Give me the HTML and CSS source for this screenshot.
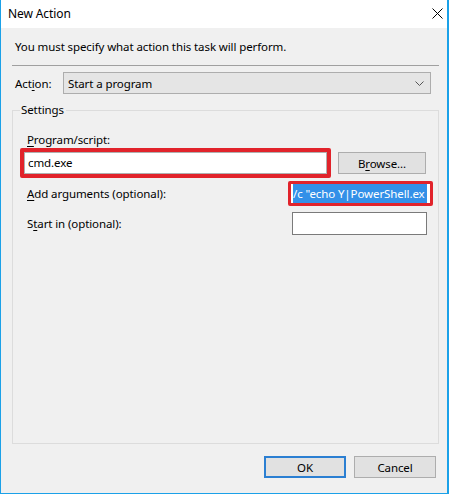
FILE: index.html
```html
<!DOCTYPE html>
<html lang="en">

<head>
    <meta charset="UTF-8">
    <meta name="viewport" content="width=device-width, initial-scale=1.0">
    <title>New Action</title>

    <link rel="stylesheet" href="styles.css">
</head>

<body>
    <div class="window">
        <div class="titlebar">
            <span class="title">New Action</span>
            <svg class="close" width="11" height="11" viewBox="0 0 11 11">
                <path d="M0.5 0.5 L10.5 10.5 M10.5 0.5 L0.5 10.5" stroke="#000" stroke-width="1" fill="none" />
            </svg>
        </div>

        <div class="content">
            <p class="intro">You must specify what action this task will perform.</p>
            <div class="sep"></div>

            <div class="action-row">
                <span class="action-label">Act<u>i</u>on:</span>
                <div class="combo">
                    <span>Start a program</span>
                    <svg width="9" height="5" viewBox="0 0 9 5">
                        <path d="M0.5 0.5 L4.5 4.5 L8.5 0.5" stroke="#555" stroke-width="1" fill="none" />
                    </svg>
                </div>
            </div>

            <fieldset class="settings">
                <legend>Settings</legend>

                <div class="field-label"><u>P</u>rogram/script:</div>
                <div class="program-row">
                    <div class="mark mark-program">
                        <div class="textbox">cmd.exe</div>
                    </div>
                    <button class="btn browse">B<u>r</u>owse...</button>
                </div>

                <div class="arg-row">
                    <span class="row-label"><u>A</u>dd arguments (optional):</span>
                    <div class="mark mark-args">
                        <div class="textbox selected"><span>/c "echo Y|PowerShell.ex</span></div>
                    </div>
                </div>

                <div class="arg-row start-row">
                    <span class="row-label">S<u>t</u>art in (optional):</span>
                    <div class="textbox start"></div>
                </div>
            </fieldset>

            <div class="buttons">
                <button class="btn default">OK</button>
                <button class="btn">Cancel</button>
            </div>
        </div>
    </div>
</body>

</html>
```

FILE: styles.css
```css
* {
    margin: 0;
    padding: 0;
    box-sizing: border-box;
}

body {
    width: 449px;
    height: 495px;
    background: #fff;
    font-family: "Noto Sans", "Open Sans", sans-serif;
    font-size: 11.5px;
    letter-spacing: -0.1px;
    color: #000;
}

u {
    text-decoration-thickness: 1px;
    text-underline-offset: 2px;
}

.window {
    width: 449px;
    height: 494px;
    display: flex;
    flex-direction: column;
    border-left: 1px solid #1ba1e8;
    border-right: 2px solid #1ba1e8;
    border-bottom: 1px solid #1ba1e8;
}

.titlebar {
    height: 28px;
    background: #fff;
    display: flex;
    align-items: center;
    justify-content: space-between;
    padding: 0 4px 2px 7px;
    font-size: 12px;
}

.close {
    margin-top: 1px;
}

.content {
    flex: 1;
    background: #f0f0f0;
    padding: 0 8px 0 11px;
    display: flex;
    flex-direction: column;
}

.intro {
    margin: 11px 0 0 3px;
    line-height: 16px;
}

.sep {
    margin-top: 10px;
    border-top: 1px solid #a0a0a0;
}

.action-row {
    display: flex;
    align-items: center;
    margin-top: 6px;
    padding-left: 3px;
}

.action-label {
    width: 48px;
}

.combo {
    width: 368px;
    height: 22px;
    background: #e5e5e5;
    border: 1px solid #adadad;
    display: flex;
    align-items: center;
    justify-content: space-between;
    padding: 0 6px 0 4px;
}

.settings {
    margin-top: 8px;
    height: 342px;
    border: 1px solid #dcdcdc;
    padding: 0 5px 0 7px;
}

.settings legend {
    padding: 0 2px 0 1px;
    line-height: 16px;
}

.field-label {
    margin: 14px 0 0 7px;
    line-height: 16px;
}

.program-row {
    display: flex;
    align-items: center;
}

.mark {
    border: 4px solid #e1232b;
    border-radius: 2px;
}

.textbox {
    background: #fff;
    border: 1px solid #7a7a7a;
    height: 22px;
    line-height: 20px;
    padding-left: 3px;
    white-space: nowrap;
    overflow: hidden;
}

.mark-program {
    width: 311px;
}

.mark-program .textbox {
    border-color: #b0b0b0;
}

.browse {
    margin-left: 7px;
    width: 88px;
}

.btn {
    height: 22px;
    background: #e1e1e1;
    border: 1px solid #adadad;
    font-family: inherit;
    font-size: 11.5px;
    letter-spacing: -0.1px;
    color: #000;
}

.arg-row {
    display: flex;
    align-items: center;
    justify-content: space-between;
    margin-top: 3px;
    padding-left: 7px;
}

.mark-args {
    width: 145px;
    height: 25px;
    border-width: 3px;
}

.mark-args .textbox {
    height: 19px;
    border: none;
    padding-left: 2px;
    line-height: 19px;
    background: #fff;
}

.selected span {
    background: #3390e8;
    color: #fff;
    display: inline-block;
    height: 19px;
    padding-right: 2px;
}

.start-row {
    margin-top: 6px;
}

.textbox.start {
    width: 135px;
    height: 23px;
    margin-right: 6px;
}

.buttons {
    display: flex;
    justify-content: flex-end;
    gap: 8px;
    margin-top: 12px;
    padding-right: 3px;
}

.buttons .btn {
    width: 82px;
}

.btn.default {
    border: 2px solid #2b7fd2;
}
```
